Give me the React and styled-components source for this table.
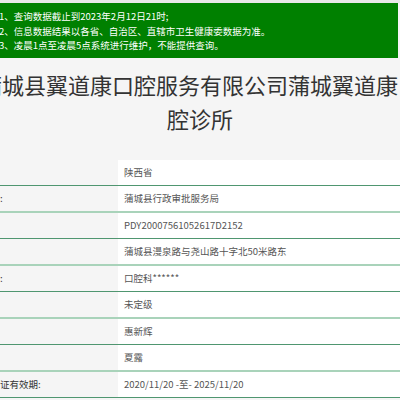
import React from "react";
import styled, { createGlobalStyle } from "styled-components";

const GlobalStyle = createGlobalStyle`
  html, body {
    margin: 0;
    padding: 0;
    background: #f5f5f5;
    overflow: hidden;
  }
  body {
    font-family: "Noto Sans CJK SC", "Noto Sans", sans-serif;
    color: #333;
  }
`;

const notices = [
  "1、查询数据截止到2023年2月12日21时;",
  "2、信息数据结果以各省、自治区、直辖市卫生健康委数据为准。",
  "3、凌晨1点至凌晨5点系统进行维护，不能提供查询。",
];

const rows = [
  { label: "省份:", value: "陕西省" },
  { label: "登记机关:", value: "蒲城县行政审批服务局" },
  { label: "登记号:", value: "PDY20007561052617D2152" },
  { label: "地址:", value: "蒲城县漫泉路与尧山路十字北50米路东" },
  { label: "诊疗科目:", value: "口腔科******" },
  { label: "级别:", value: "未定级" },
  { label: "法人:", value: "惠新辉" },
  { label: "负责人:", value: "夏露" },
  { label: "执业许可证有效期:", value: "2020/11/20 -至- 2025/11/20" },
];

const App = () => {
  return (
    <>
      <GlobalStyle />
      <Page>
        <Notice>
          {notices.map((n) => (
            <NoticeLine key={n}>{n}</NoticeLine>
          ))}
        </Notice>
        <Title>蒲城县翼道康口腔服务有限公司蒲城翼道康口腔诊所</Title>
        <Table>
          {rows.map((r, i) => (
            <Row key={r.label} light={i % 2 === 1}>
              <Label>{r.label}</Label>
              <Value>{r.value}</Value>
            </Row>
          ))}
        </Table>
      </Page>
    </>
  );
};

export default App;

const Page = styled.div`
  width: 400px;
  height: 400px;
  overflow: hidden;
  border-top: 3px solid #e8e8e8;
  box-sizing: border-box;
`;

const Notice = styled.div`
  background: #008000;
  color: #fff;
  font-size: 9.5px;
  line-height: 14.5px;
  margin: 0 2px 0 -24px;
  padding: 6px 0 5px 23px;
`;

const NoticeLine = styled.div`
  white-space: nowrap;
`;

const Title = styled.h1`
  margin: 0 -25px;
  padding: 9px 0 25px;
  font-size: 22px;
  line-height: 34px;
  font-weight: normal;
  text-align: center;
  color: #333;
`;

const Table = styled.div`
  margin-left: -50px;
  display: flex;
  flex-direction: column;
`;

const Row = styled.div`
  display: grid;
  grid-template-columns: 168px 1fr;
  height: 25px;
  border-bottom: ${(p) => (p.light ? "2px solid #a9d3ba" : "1px solid #4f9670")};
  font-size: 9.5px;
`;

const Label = styled.div`
  display: flex;
  align-items: center;
  padding-left: 12px;
  white-space: nowrap;
  color: #333;
`;

const Value = styled.div`
  display: flex;
  align-items: center;
  padding-left: 6px;
  background: #fff;
  white-space: nowrap;
  color: #555;
`;
